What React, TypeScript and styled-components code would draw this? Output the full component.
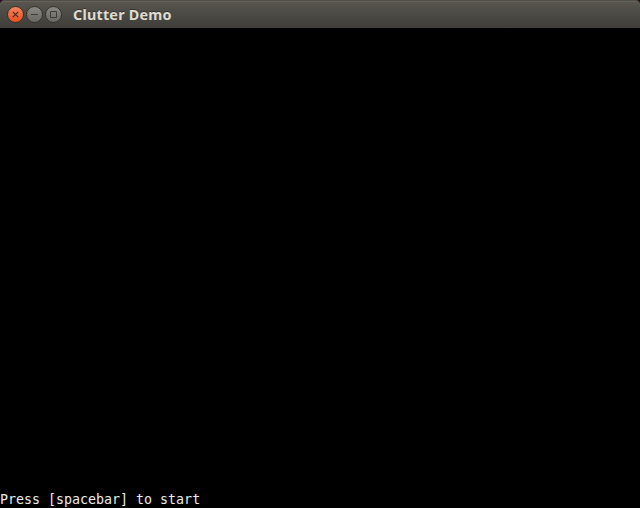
import React from "react";
import styled, { createGlobalStyle } from "styled-components";

const Global = createGlobalStyle`
  * { box-sizing: border-box; }
  body { margin: 0; background: #000; overflow: hidden; }
`;
const Window = styled.div`
  width: 640px;
  height: 508px;
  display: flex;
  flex-direction: column;
  background: #000;
`;
const TitleArea = styled.div`
  height: 28px;
  background: #2a0a22;
`;
const TitleBar = styled.header`
  height: 28px;
  display: flex;
  align-items: center;
  padding: 1px 0 0 7px;
  border-radius: 5px 5px 0 0;
  background: linear-gradient(#59574f, #3e3d39);
  box-shadow: inset 0 1px #4f4d47, inset 0 2px #66635b;
`;
const Controls = styled.div`
  display: flex;
  gap: 2px;
`;
const ControlButton = styled.button<{ $close?: boolean }>`
  width: 17px;
  height: 17px;
  padding: 0;
  border: 1px solid #33322e;
  border-radius: 50%;
  background: ${(p) => (p.$close ? "linear-gradient(#f5835d, #e9501f)" : "linear-gradient(#8a8882, #696760)")};
  svg { display: block; }
`;
const Title = styled.h1`
  margin: 0 0 0 11px;
  font: 700 14.4px/20px "Noto Sans", sans-serif;
  letter-spacing: 0.2px;
  color: #dfdbd2;
  text-shadow: 0 -1px #33322e;
`;
const Stage = styled.main`
  flex: 1;
  display: flex;
  align-items: flex-end;
`;
const Prompt = styled.p`
  margin: 0;
  font: 13.3px/17px "DejaVu Sans Mono", monospace;
  color: #ececec;
  white-space: pre;
`;

export default function App() {
  return (
    <Window>
      <Global />
      <TitleArea>
        <TitleBar>
          <Controls>
            <ControlButton $close aria-label="Close">
              <svg width="15" height="15" fill="none" stroke="#40291f" strokeWidth="1.1"><path d="M4.8 4.8l5.4 5.4M10.2 4.8l-5.4 5.4" /></svg>
            </ControlButton>
            <ControlButton aria-label="Minimize">
              <svg width="15" height="15" fill="none" stroke="#3c3b37"><path d="M4 7.5h7" /></svg>
            </ControlButton>
            <ControlButton aria-label="Maximize">
              <svg width="15" height="15" fill="none" stroke="#3c3b37"><path d="M4.5 4.5h6v6h-6z" /></svg>
            </ControlButton>
          </Controls>
          <Title>Clutter Demo</Title>
        </TitleBar>
      </TitleArea>
      <Stage><Prompt>Press [spacebar] to start</Prompt></Stage>
    </Window>
  );
}
